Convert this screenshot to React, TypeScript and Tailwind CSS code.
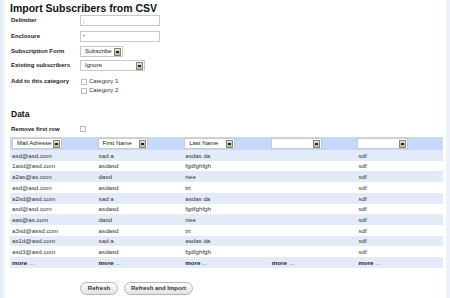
import React from "react";

function DropBtn() {
  return (
    <span className="ml-auto mr-[1px] flex h-[8px] w-[7px] shrink-0 items-center justify-center border border-[#8a8478] bg-gradient-to-b from-[#e4e0d6] to-[#bdb6a6]">
      <span className="h-[2px] w-[3px] bg-[#222]" />
    </span>
  );
}

function Select({ label, w }: { label: string; w: string }) {
  return (
    <div className={`flex h-[11px] items-center overflow-hidden whitespace-nowrap border border-[#c8c8c8] bg-white pl-[4px] text-[6px] text-[#222] ${w}`}>
      <span>{label}</span>
      <DropBtn />
    </div>
  );
}

function Box() {
  return <span className="inline-block h-[6px] w-[6px] shrink-0 border border-[#bbb] bg-white" />;
}

const rows = [
  ["asd@asd.com", "sad a", "asdas da", "", "sdf"],
  ["1asd@asd.com", "asdasd", "fgdfghfgh", "", "sdf"],
  ["a2as@as.com", "dasd", "rtee", "", "sdf"],
  ["asd@asd.com", "asdasd", "trt", "", "sdf"],
  ["a2sd@asd.com", "sad a", "asdas da", "", "sdf"],
  ["asd@asd.com", "asdasd", "fgdfghfgh", "", "sdf"],
  ["aas@as.com", "dasd", "rtee", "", "sdf"],
  ["a3sd@assd.com", "asdasd", "trt", "", "sdf"],
  ["as1d@asd.com", "sad a", "asdas da", "", "sdf"],
  ["asd3@asd.com", "asdasd", "fgdfghfgh", "", "sdf"],
];

export default function App() {
  return (
    <div className="flex h-[298px] w-[450px] overflow-hidden bg-white font-['Liberation_Sans',Arial,sans-serif] text-[#222]">
      <div className="w-[5px] shrink-0 bg-gradient-to-r from-[#e2e9f4] to-[#f3f6fb]" />
      <div className="flex w-[440px] flex-col pl-[5px]">
        <h1 className="mt-[3px] h-[11px] text-[10.5px] font-bold leading-[11px] text-[#111]">Import Subscribers from CSV</h1>

        <div className="mt-[1px] flex flex-col pl-[1px]">
          <div className="flex h-[11px] items-center">
            <span className="w-[69px] text-[6px] font-bold">Delimiter</span>
            <div className="h-[11px] w-[80px] border border-[#c8c8c8] bg-white pl-[2px] text-[6px] leading-[10px]">;</div>
          </div>
          <div className="mt-[5px] flex h-[11px] items-center">
            <span className="w-[69px] text-[6px] font-bold">Enclosure</span>
            <div className="h-[11px] w-[80px] border border-[#c8c8c8] bg-white pl-[2px] text-[6px] leading-[10px]">"</div>
          </div>
          <div className="mt-[4px] flex h-[11px] items-center">
            <span className="w-[69px] text-[6px] font-bold">Subscription Form</span>
            <Select label="Subscribe" w="w-[43px]" />
          </div>
          <div className="mt-[3px] flex h-[11px] items-center">
            <span className="w-[69px] text-[6px] font-bold">Existing subscribers</span>
            <Select label="Ignore" w="w-[65px]" />
          </div>
          <div className="mt-[6px] flex">
            <span className="w-[70px] text-[6px] font-bold leading-[9px]">Add to this category</span>
            <div className="flex flex-col text-[6px] text-[#333]">
              <div className="flex h-[9px] items-center gap-[2px]"><Box />Category 1</div>
              <div className="flex h-[9px] items-center gap-[2px]"><Box />Category 2</div>
            </div>
          </div>
        </div>

        <h2 className="mt-[14px] h-[10px] pl-[1px] text-[8.5px] font-bold leading-[10px] text-[#111]">Data</h2>
        <div className="mt-[6px] flex h-[8px] items-center pl-[1px]">
          <span className="w-[69px] text-[6px] font-bold">Remove first row</span>
          <Box />
        </div>

        <div className="mt-[4px] w-[433px]">
          <div className="grid h-[13px] grid-cols-5 items-center bg-[#c6d9fc]">
            <div className="pl-[2px]"><Select label="Mail Adresse" w="w-[50px]" /></div>
            <div className="pl-[1px]"><Select label="First Name" w="w-[50px]" /></div>
            <div className="pl-[1px]"><Select label="Last Name" w="w-[51px]" /></div>
            <div className="pl-[1px]"><Select label="" w="w-[51px]" /></div>
            <div className="pl-[1px]"><Select label="" w="w-[51px]" /></div>
          </div>
          {rows.map((r, i) => (
            <div
              key={i}
              className={`grid h-[10.73px] grid-cols-5 items-center text-[6.2px] text-[#333] ${i % 2 === 0 ? "bg-[#e3ebf8]" : "bg-white"}`}
            >
              {r.map((c, j) => (
                <div key={j} className="pl-[2px]">{c}</div>
              ))}
            </div>
          ))}
          <div className="grid h-[10.73px] grid-cols-5 items-center bg-[#e3ebf8] text-[6.2px] font-bold text-[#222]">
            {[0, 1, 2, 3, 4].map((j) => (
              <div key={j} className="pl-[2px]">more <span className="font-normal text-[#555]">...</span></div>
            ))}
          </div>
        </div>

        <div className="mt-[14px] flex gap-[6px] pl-[70px]">
          <button className="h-[13px] w-[38px] rounded-full border border-[#b5b5b5] bg-gradient-to-b from-white to-[#e2e2e2] text-[6px] font-bold text-[#333]">Refresh</button>
          <button className="h-[13px] w-[69px] rounded-full border border-[#b5b5b5] bg-gradient-to-b from-white to-[#e2e2e2] text-[6px] font-bold text-[#333]">Refresh and Import</button>
        </div>
      </div>
      <div className="ml-auto w-[4px] shrink-0 bg-[#edf1f8]" />
    </div>
  );
}
